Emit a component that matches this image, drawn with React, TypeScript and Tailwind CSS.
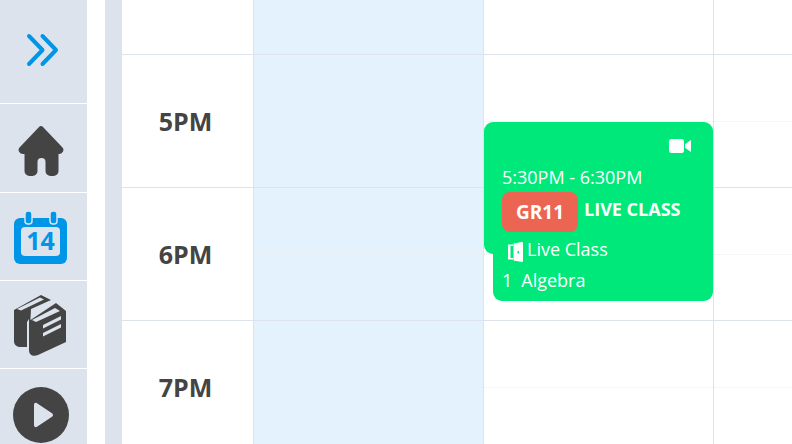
const hours = ["5PM", "6PM", "7PM"];

function HourRow({ label }: { label: string }) {
  return (
    <div className="grid h-[133px] grid-cols-[132px_230px_230px_78px] border-b border-[#dde3ed]">
      <div className="flex items-center justify-center border-r border-[#dde3ed] pr-[4px] pt-[2px] text-[25px] font-bold text-[#444444]">
        {label}
      </div>
      <div className="border-r border-[#dde3ed] bg-[#e3f2fd]">
        <div className="h-[67px] border-b border-dotted border-[#e8f0f7]" />
      </div>
      <div className="border-r border-[#dde3ed]">
        <div className="h-[67px] border-b border-dotted border-[#eef0f4]" />
      </div>
      <div>
        <div className="h-[67px] border-b border-dotted border-[#eef0f4]" />
      </div>
    </div>
  );
}

function EventCard() {
  return (
    <div className="absolute left-[362px] top-[122px] flex w-[229px] flex-col text-white">
      <div className="h-[132px] rounded-[9px] bg-[#00e879] pl-[18px] pr-[21px] pt-[17px]">
        <div className="flex h-[16px] justify-end">
          <svg width="23" height="14" viewBox="0 0 23 14" fill="#ffffff">
            <rect x="0" y="0" width="15" height="14" rx="2.5" />
            <path d="M16 5.2 22 1v12l-6-4.2z" />
          </svg>
        </div>
        <div className="mt-[9px] h-[28px] text-[18px] leading-[26px]">5:30PM - 6:30PM</div>
        <div className="flex items-start">
          <div className="flex h-[40px] w-[76px] items-center justify-center rounded-[8px] bg-[#ec6552] text-[19px] font-bold">
            GR11
          </div>
          <div className="ml-[6px] text-[18px] font-bold leading-[34px]">LIVE CLASS</div>
        </div>
      </div>
      <div className="z-10 -mt-[18px] ml-[9px] h-[65px] rounded-b-[9px] bg-[#00e879] pl-[15px]">
        <div className="flex h-[26px] items-center text-[18px]">
          <svg width="15" height="20" viewBox="0 0 15 20" fill="#ffffff" className="mt-[6px] mr-[4px]">
            <path d="M0 2.500h5v1.500H2.500v12H5v1.500H0z" />
            <path d="M5.500 1.500 14 0a1 1 0 0 1 1 1v18a1 1 0 0 1-1 1l-8.500-1.500zM9.500 9v2.500H11V9z" fillRule="evenodd" />
          </svg>
          <span>Live Class</span>
        </div>
        <div className="-ml-[6px] mt-[2px] flex h-[32px] items-center text-[18px]">
          <span>1</span>
          <span className="ml-[9px]">Algebra</span>
        </div>
      </div>
    </div>
  );
}

export default function App() {
  return (
    <div className="flex h-[444px] w-[792px] overflow-hidden bg-white font-['Open_Sans',sans-serif]">
      <aside className="flex w-[87px] shrink-0 flex-col bg-[#dde3ed]">
        <div className="flex h-[104px] shrink-0 items-center justify-center border-b border-white pb-[3px]">
          <svg width="34" height="34" viewBox="0 0 34 34" fill="none" stroke="#0096e8" strokeWidth="4" strokeLinecap="round" strokeLinejoin="round" className="-ml-[2px]">
            <path d="M3 3 16.500 17 3 31" />
            <path d="M16.500 3 30 17 16.500 31" />
          </svg>
        </div>
        <div className="flex h-[89px] shrink-0 items-center justify-center border-b border-white pt-[5px]">
          <svg width="46" height="50" viewBox="0 0 46 50" fill="#444444" className="mr-[5px]">
            <path d="M23 0a3 3 0 0 1 2 1l19 20a4 4 0 0 1-3 7h-.500v17a5 5 0 0 1-5 5h-3a5 5 0 0 1-5-5v-9a4 4 0 0 0-8 0v9a5 5 0 0 1-5 5h-3a5 5 0 0 1-5-5V28H5a4 4 0 0 1-3-7L21 1a3 3 0 0 1 2-1z" />
          </svg>
        </div>
        <div className="flex h-[88px] shrink-0 items-center justify-center border-b border-white pt-[3px] pr-[6px]">
          <div className="relative h-[54px] w-[53px]">
            <svg width="53" height="54" viewBox="0 0 53 54">
              <rect x="0" y="7" width="53" height="46" rx="6" fill="#0096e8" />
              <rect x="11" y="0" width="7" height="13" rx="3" fill="#0096e8" stroke="#dde3ed" strokeWidth="1.500" />
              <rect x="36" y="0" width="7" height="13" rx="3" fill="#0096e8" stroke="#dde3ed" strokeWidth="1.500" />
              <rect x="7" y="16" width="39" height="29" rx="4" fill="#dde3ed" />
            </svg>
            <span className="absolute left-0 top-[12px] w-[53px] text-center text-[25px] font-bold leading-[34px] text-[#0096e8]">14</span>
          </div>
        </div>
        <div className="flex h-[88px] shrink-0 items-center justify-center border-b border-white pt-[3px] pr-[6px]">
          <svg width="53" height="62" viewBox="0 0 53 62">
            <path d="M0 15 27 0l10 5-20 9-2 38-8 0c-4 0-7-2-7-6z" fill="#444444" />
            <path d="M3 14 26 2.500l4 2L7 15.500z" fill="#dde3ed" />
            <path d="M15 26 42 8l10 8v31L24 60c-5 2-9 0-9-5z" fill="#444444" />
            <path d="M15 24 13 27v29h2z" fill="#dde3ed" />
            <path d="M18 25 41 13l5 3-24 11z" fill="#dde3ed" />
            <path d="M29 30 47 21v3.500L29 33.500zM29 38l18-9v3.500L29 41.500z" fill="#dde3ed" />
          </svg>
        </div>
        <div className="flex flex-1 items-start justify-center pt-[18px] pr-[6px]">
          <svg width="56" height="56" viewBox="0 0 56 56">
            <circle cx="28" cy="28" r="28" fill="#444444" />
            <path d="M21 18c0-2 1.500-2.700 3-1.800l15 10c1.300.9 1.300 2.700 0 3.600l-15 10c-1.500.9-3 .2-3-1.800z" fill="#dde3ed" />
          </svg>
        </div>
      </aside>
      <div className="w-[18px] shrink-0" />
      <div className="w-[17px] shrink-0 bg-[#dde3ed]" />
      <main className="relative flex-1">
        <div className="grid h-[55px] grid-cols-[132px_230px_230px_78px] border-b border-[#dde3ed]">
          <div className="border-r border-[#dde3ed]" />
          <div className="border-r border-[#dde3ed] bg-[#e3f2fd]" />
          <div className="border-r border-[#dde3ed]" />
          <div />
        </div>
        {hours.map((h) => (
          <HourRow key={h} label={h} />
        ))}
        <EventCard />
      </main>
    </div>
  );
}
